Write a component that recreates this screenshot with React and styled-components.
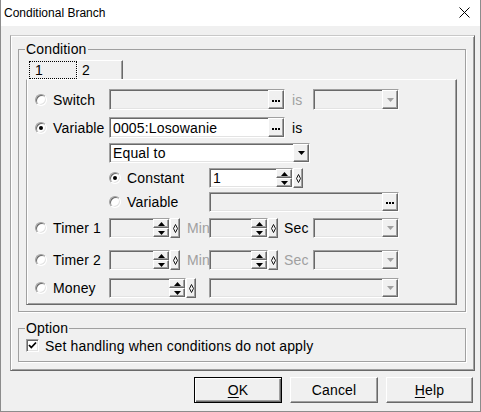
import React from "react";
import styled, { createGlobalStyle } from "styled-components";

const GlobalStyle = createGlobalStyle`
  html, body {
    margin: 0;
    padding: 0;
    background: #f0f0f0;
  }
  body {
    font-family: "Liberation Sans", Arial, sans-serif;
    font-size: 14px;
    letter-spacing: 0.15px;
    color: #000;
  }
  * {
    box-sizing: border-box;
  }
`;

export default function App() {
  return (
    <>
      <GlobalStyle />
      <Window>
        <TitleBar>
          <Title>Conditional Branch</Title>
          <svg width="11" height="11" viewBox="0 0 11 11">
            <path d="M0.5 0.5 L10.5 10.5 M10.5 0.5 L0.5 10.5" stroke="#000" strokeWidth="1" />
          </svg>
        </TitleBar>

        <Body>
          <Panel>
            {/* condition group */}
            <Group>
              <Legend>Condition</Legend>
              <GroupBody>
                <Tabs>
                  <Tab $active $w={48}>1</Tab>
                  <Tab $w={46}>2</Tab>
                </Tabs>

                <TabPanel>
                  <Row $h={21}>
                    <Choice label="Switch" />
                    <Field $w={176} $h={21} $off>
                      <FieldText />
                      <Ellipsis />
                    </Field>
                    <Word $w={28} $pl={7} $off>is</Word>
                    <Combo $w={86} $h={21} off />
                  </Row>

                  <Row $h={21} $mt={7}>
                    <Choice label="Variable" checked />
                    <Field $w={176} $h={21}>
                      <FieldText>0005:Losowanie</FieldText>
                      <Ellipsis />
                    </Field>
                    <Word $w={28} $pl={7}>is</Word>
                  </Row>

                  <Row $mt={5} $indent={74}>
                    <Combo $w={201} text="Equal to" />
                  </Row>

                  <Row $mt={5} $indent={74}>
                    <Choice label="Constant" checked w={100} />
                    <Spin w={94} text="1" />
                  </Row>

                  <Row $mt={4} $indent={74}>
                    <Choice label="Variable" w={100} />
                    <Field $w={190} $off>
                      <FieldText />
                      <Ellipsis />
                    </Field>
                  </Row>

                  <Row $mt={6}>
                    <Choice label="Timer 1" />
                    <Spin w={71} off />
                    <Word $w={29} $pl={7} $off>Min</Word>
                    <Spin w={69} off />
                    <Word $w={35} $pl={6}>Sec</Word>
                    <Combo $w={86} off />
                  </Row>

                  <Row $mt={12}>
                    <Choice label="Timer 2" />
                    <Spin w={71} off />
                    <Word $w={29} $pl={7} $off>Min</Word>
                    <Spin w={69} off />
                    <Word $w={35} $pl={6} $off>Sec</Word>
                    <Combo $w={86} off />
                  </Row>

                  <Row $mt={8}>
                    <Choice label="Money" />
                    <Spin w={87} off />
                    <Word $w={13} />
                    <Combo $w={190} off />
                  </Row>
                </TabPanel>
              </GroupBody>
            </Group>

            {/* option group */}
            <Group $mt={8}>
              <Legend>Option</Legend>
              <CheckRow>
                <CheckBox>
                  <svg width="9" height="9" viewBox="0 0 9 9">
                    <path d="M1 4 L3.3 6.5 L8 1.5" stroke="#000" strokeWidth="1.8" fill="none" />
                  </svg>
                </CheckBox>
                Set handling when conditions do not apply
              </CheckRow>
            </Group>
          </Panel>

          <ButtonBar>
            <Button $default $w={88}>
              <u>O</u>K
            </Button>
            <Button $w={88}>Cancel</Button>
            <Button $w={87}>
              <u>H</u>elp
            </Button>
          </ButtonBar>
        </Body>
      </Window>
    </>
  );
}

function Choice({ label, checked, w = 74 }) {
  return (
    <ChoiceBox $w={w}>
      <Radio $checked={checked} />
      <span>{label}</span>
    </ChoiceBox>
  );
}

function Ellipsis() {
  return (
    <InsetButton $w={16}>
      <Dots>
        <i />
        <i />
        <i />
      </Dots>
    </InsetButton>
  );
}

function Combo({ text, off, $w, $h }) {
  return (
    <Field $w={$w} $h={$h} $off={off}>
      <FieldText>{text}</FieldText>
      <InsetButton $w={16}>
        <svg width="7" height="4" viewBox="0 0 7 4">
          <path d="M0 0 H7 L3.5 4 Z" fill={off ? "#a0a0a0" : "#000"} />
        </svg>
      </InsetButton>
    </Field>
  );
}

function Spin({ w, text, off }) {
  return (
    <SpinWrap>
      <Field $w={w - 10} $off={off}>
        <FieldText>{text}</FieldText>
        <SpinButtons>
          <SpinButton>
            <svg width="7" height="4" viewBox="0 0 7 4">
              <path d="M0 4 H7 L3.5 0 Z" fill="#000" />
            </svg>
          </SpinButton>
          <SpinButton>
            <svg width="7" height="4" viewBox="0 0 7 4">
              <path d="M0 0 H7 L3.5 4 Z" fill="#000" />
            </svg>
          </SpinButton>
        </SpinButtons>
      </Field>
      <ThinButton>
        <svg width="5" height="9" viewBox="0 0 5 9">
          <path d="M2.5 0.5 L4.5 4.5 L2.5 8.5 L0.5 4.5 Z" stroke="#000" strokeWidth="0.9" fill="none" />
        </svg>
      </ThinButton>
    </SpinWrap>
  );
}

const Window = styled.div`
  width: 481px;
  height: 412px;
  border: 1px solid #8c8c8c;
  border-top: none;
  background: #f0f0f0;
  display: flex;
  flex-direction: column;
`;

const TitleBar = styled.div`
  height: 26px;
  background: #fff;
  display: flex;
  align-items: center;
  justify-content: space-between;
  padding: 0 10px 1px 3px;
`;

const Title = styled.span`
  font-size: 12px;
  letter-spacing: 0;
`;

const Body = styled.div`
  padding: 9px 5px 0 9px;
`;

const Panel = styled.div`
  border: 1px solid;
  border-color: #c8c8c8 #696969 #696969 #a0a0a0;
  box-shadow: inset 1px 1px 0 #fff, inset -1px -1px 0 #a0a0a0;
  padding: 5px 8px 8px 7px;
`;

const Group = styled.fieldset`
  margin: ${({ $mt }) => $mt || 0}px 0 0 0;
  padding: 0;
  border: 1px solid #a0a0a0;
  box-shadow: 1px 1px 0 #fff;
  min-width: 0;
`;

const Legend = styled.legend`
  margin-left: 6px;
  padding: 0 1px;
  line-height: 16px;
  font-size: 14px;
`;

const GroupBody = styled.div`
  padding: 3px 8px 6px 7px;
`;

const Tabs = styled.div`
  display: flex;
  height: 19px;
  margin-left: 3px;
`;

const Tab = styled.div`
  width: ${({ $w }) => $w}px;
  display: flex;
  align-items: center;
  padding-left: ${({ $active }) => ($active ? 5 : 4)}px;
  ${({ $active }) =>
    $active
      ? `
    height: 18px;
    margin-top: 1px;
    border: 1px dotted #000;
  `
      : `
    border-top: 1px solid #fff;
    border-left: 1px solid #fff;
    border-right: 1px solid #696969;
    box-shadow: inset -1px 0 0 #a0a0a0;
  `}
`;

const TabPanel = styled.div`
  border: 1px solid;
  border-color: #fff #696969 #696969 #a0a0a0;
  box-shadow: inset 1px 0 0 #fff, inset -1px -1px 0 #a0a0a0;
  padding: 9px 0 6px 8px;
`;

const Row = styled.div`
  display: flex;
  align-items: center;
  height: ${({ $h }) => $h || 20}px;
  margin-top: ${({ $mt }) => $mt || 0}px;
  padding-left: ${({ $indent }) => $indent || 0}px;
`;

const ChoiceBox = styled.label`
  width: ${({ $w }) => $w}px;
  display: flex;
  align-items: center;
  gap: 6px;
  white-space: nowrap;
`;

const Radio = styled.span`
  position: relative;
  width: 12px;
  height: 12px;
  flex: none;
  border-radius: 50%;
  background: #fff;
  border: 1px solid;
  border-color: #a0a0a0 #fff #fff #a0a0a0;
  box-shadow: inset 1px 1px 0 #696969, inset -1px -1px 0 #e3e3e3;

  &::after {
    content: "";
    display: ${({ $checked }) => ($checked ? "block" : "none")};
    position: absolute;
    left: 3px;
    top: 3px;
    width: 4px;
    height: 4px;
    border-radius: 50%;
    background: #000;
  }
`;

const Word = styled.span`
  width: ${({ $w }) => $w}px;
  padding-left: ${({ $pl }) => $pl || 0}px;
  color: ${({ $off }) => ($off ? "#a0a0a0" : "#000")};
  flex: none;
`;

const Field = styled.div`
  width: ${({ $w }) => $w}px;
  height: ${({ $h }) => $h || 20}px;
  flex: none;
  display: flex;
  align-items: stretch;
  padding: 1px;
  background: ${({ $off }) => ($off ? "#f0f0f0" : "#fff")};
  border: 1px solid;
  border-color: #a0a0a0 #fff #fff #a0a0a0;
  box-shadow: inset 1px 1px 0 #696969, inset -1px -1px 0 #e3e3e3;
`;

const FieldText = styled.span`
  flex: 1;
  display: flex;
  align-items: center;
  padding-left: 2px;
  white-space: nowrap;
  overflow: hidden;
`;

const InsetButton = styled.span`
  width: ${({ $w }) => $w}px;
  margin: -1px -1px -1px 0;
  flex: none;
  display: flex;
  align-items: center;
  justify-content: center;
  background: #f0f0f0;
  border: 1px solid;
  border-color: #fff #696969 #696969 #fff;
  box-shadow: inset -1px -1px 0 #a0a0a0;
`;

const Dots = styled.span`
  display: flex;
  gap: 1px;
  margin-top: 2px;

  i {
    width: 2px;
    height: 2px;
    background: #000;
  }
`;

const SpinWrap = styled.div`
  display: flex;
  height: 20px;
  flex: none;
`;

const SpinButtons = styled.span`
  width: 16px;
  margin: -1px -1px -1px 0;
  display: flex;
  flex-direction: column;
`;

const SpinButton = styled.span`
  flex: 1;
  display: flex;
  align-items: center;
  justify-content: center;
  background: #f0f0f0;
  border: 1px solid;
  border-color: #fff #696969 #696969 #fff;
  box-shadow: inset -1px -1px 0 #a0a0a0;
`;

const ThinButton = styled.span`
  width: 10px;
  display: flex;
  align-items: center;
  justify-content: center;
  background: #f0f0f0;
  border: 1px solid;
  border-color: #fff #696969 #696969 #fff;
  box-shadow: inset -1px -1px 0 #a0a0a0;
`;

const CheckRow = styled.div`
  display: flex;
  align-items: center;
  gap: 6px;
  height: 15px;
  margin: 2px 0 0 7px;
  padding-bottom: 8px;
  box-sizing: content-box;
`;

const CheckBox = styled.span`
  width: 13px;
  height: 13px;
  flex: none;
  display: flex;
  align-items: center;
  justify-content: center;
  background: #fff;
  border: 1px solid;
  border-color: #a0a0a0 #fff #fff #a0a0a0;
  box-shadow: inset 1px 1px 0 #696969, inset -1px -1px 0 #e3e3e3;
`;

const ButtonBar = styled.div`
  display: flex;
  justify-content: flex-end;
  gap: 8px;
  margin-top: 6px;
  padding-right: 2px;
`;

const Button = styled.div`
  width: ${({ $w }) => $w}px;
  height: 26px;
  display: flex;
  align-items: center;
  justify-content: center;
  background: #f0f0f0;
  border: 1px solid;
  border-color: ${({ $default }) =>
    $default ? "#000" : "#fff #696969 #696969 #fff"};
  box-shadow: ${({ $default }) =>
    $default
      ? "inset 1px 1px 0 #fff, inset -1px -1px 0 #696969, inset -2px -2px 0 #a0a0a0"
      : "inset -1px -1px 0 #a0a0a0"};

  u {
    text-decoration-thickness: 1px;
    text-underline-offset: 2px;
  }
`;
